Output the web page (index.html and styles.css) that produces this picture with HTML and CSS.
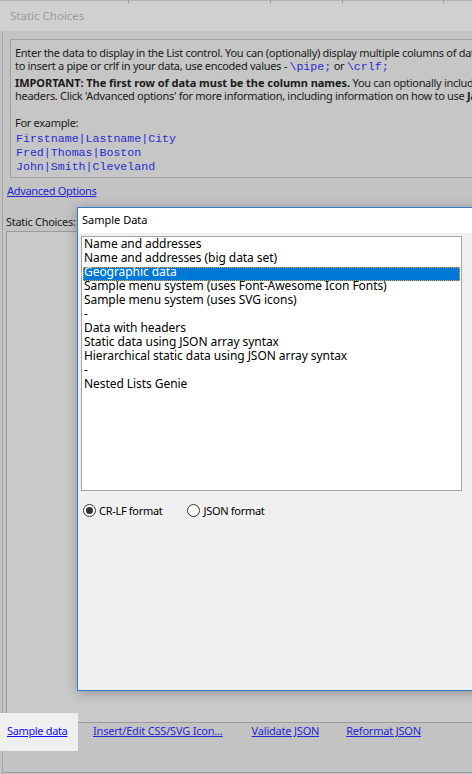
FILE: index.html
```html
<!DOCTYPE html>
<html>
<head>
<meta charset="utf-8">
<link rel="stylesheet" href="styles.css">
</head>
<body>
<div class="topline"><span class="tick t1"></span><span class="tick t2"></span><span class="tick t3"></span><span class="tick t4"></span></div>
<div class="titlebar">Static Choices</div>
<div class="main">
  <div class="info">
    <div class="line">Enter the data to display in the List control. You can (optionally) display multiple columns of data by separating them with a pipe. If you need</div>
    <div class="line">to insert a pipe or crlf in your data, use encoded values - <span class="code">\pipe;</span> or <span class="code">\crlf;</span></div>
    <div class="para">
      <div class="line"><b>IMPORTANT: The first row of data must be the column names.</b> You can optionally include column</div>
      <div class="line">headers. Click 'Advanced options' for more information, including information on how to use <b>JavaScript</b></div>
    </div>
    <div class="para2">
      <div class="line">For example:</div>
      <div class="monoblock">
        <div class="mono">Firstname|Lastname|City</div>
        <div class="mono">Fred|Thomas|Boston</div>
        <div class="mono">John|Smith|Cleveland</div>
      </div>
    </div>
  </div>
  <div class="adv"><a href="#">Advanced Options</a></div>
  <div class="label">Static Choices:</div>
  <div class="textarea"></div>
  <div class="links">
    <div class="hl"><a href="#">Sample data</a></div>
    <a href="#" class="l2">Insert/Edit CSS/SVG Icon...</a>
    <a href="#" class="l3">Validate JSON</a>
    <a href="#" class="l4">Reformat JSON</a>
  </div>
  <div class="bottomline"></div>
</div>

<div class="dialog">
  <div class="dtitle">Sample Data</div>
  <div class="dbody">
    <div class="listbox">
      <div class="item">Name and addresses</div>
      <div class="item">Name and addresses (big data set)</div>
      <div class="item sel">Geographic data</div>
      <div class="item">Sample menu system (uses Font-Awesome Icon Fonts)</div>
      <div class="item">Sample menu system (uses SVG icons)</div>
      <div class="item">-</div>
      <div class="item">Data with headers</div>
      <div class="item">Static data using JSON array syntax</div>
      <div class="item">Hierarchical static data using JSON array syntax</div>
      <div class="item">-</div>
      <div class="item">Nested Lists Genie</div>
    </div>
    <div class="radios">
      <label class="radio"><span class="circle checked"></span>CR-LF format</label>
      <label class="radio r2"><span class="circle"></span>JSON format</label>
    </div>
  </div>
</div>
</body>
</html>
```
FILE: styles.css
```css
html, body {
  margin: 0;
  padding: 0;
}
body {
  width: 472px;
  height: 774px;
  overflow: hidden;
  background: #c3c3c3;
  font-family: "Noto Sans", "Open Sans", sans-serif;
  font-size: 11px;
  letter-spacing: -0.3px;
  color: #1a1a1a;
  position: relative;
}
.topline {
  height: 1px;
  background: #b3b3b3;
  position: relative;
}
.tick {
  position: absolute;
  top: 0;
  width: 1px;
  height: 3px;
  background: #9a9a9a;
}
.t1 { left: 128px; }
.t2 { left: 270px; }
.t3 { left: 342px; }
.t4 { left: 443px; }
.titlebar {
  height: 30px;
  line-height: 30px;
  background: #d0d0d0;
  color: #9b9b9b;
  padding-left: 10px;
  font-size: 11.5px;
  letter-spacing: 0;
}
.main {
  margin-left: 2px;
  border-left: 1px solid #a3a3a3;
  height: 743px;
  box-sizing: border-box;
  padding-top: 8px;
}
.info {
  margin-left: 7px;
  width: 560px;
  height: 139px;
  box-sizing: border-box;
  border: 1px solid #a2a2a2;
  background: #c6c6c6;
  padding: 6px 0 0 4px;
  white-space: nowrap;
  overflow: hidden;
}
.line {
  height: 13px;
  line-height: 13px;
}
.para { margin-top: 4px; }
.para2 { margin-top: 14px; }
.monoblock { margin-top: 3px; }
.code, .mono {
  font-family: "Liberation Mono", "Courier New", monospace;
  color: #2b2bd0;
  letter-spacing: 0;
}
.code { font-size: 11.6px; }
.mono {
  font-size: 11.6px;
  height: 14px;
  line-height: 14px;
  padding-left: 1px;
}
b {
  font-weight: 700;
  letter-spacing: -0.05px;
}
a {
  color: #2525d6;
  text-decoration: underline;
}
.adv {
  margin-top: 6px;
  padding-left: 4px;
  height: 13px;
  line-height: 13px;
}
.label {
  margin-top: 18px;
  padding-left: 3px;
  height: 13px;
  line-height: 13px;
}
.textarea {
  margin-left: 3px;
  margin-top: 3px;
  height: 492px;
  box-sizing: border-box;
  border: 1px solid #9b9b9b;
  border-right: none;
  background: #cacaca;
}
.links {
  display: flex;
  align-items: center;
  margin-top: -10px;
  height: 38px;
  margin-left: -3px;
  letter-spacing: -0.2px;
}
.hl {
  background: #efefef;
  width: 78px;
  height: 38px;
  box-sizing: border-box;
  padding-left: 7px;
  padding-bottom: 3px;
  display: flex;
  align-items: center;
  letter-spacing: -0.35px;
}
.hl a { color: #1010ff; }
.links > a { margin-bottom: 3px; }
.l2 { margin-left: 15px; }
.l3 { margin-left: 29px; }
.l4 { margin-left: 27px; }
.bottomline {
  margin-top: 21px;
  margin-left: -1px;
  height: 1px;
  background: #9e9e9e;
}
.dialog {
  position: absolute;
  left: 77px;
  top: 207px;
  width: 420px;
  height: 484px;
  box-sizing: border-box;
  border: 1px solid #2f7ccc;
  background: #f0f0f0;
  box-shadow: 0 2px 12px rgba(0, 0, 0, 0.28);
  color: #000;
}
.dtitle {
  height: 25px;
  line-height: 24px;
  background: #fff;
  padding-left: 4px;
  font-size: 11px;
  letter-spacing: 0;
}
.dbody {
  padding: 3px 0 0 3px;
}
.listbox {
  width: 381px;
  height: 255px;
  box-sizing: border-box;
  border: 1px solid #a5a5a5;
  background: #fff;
  padding: 2px 1px 0 1px;
  font-size: 12px;
  letter-spacing: -0.06px;
}
.item {
  height: 14px;
  line-height: 10px;
  padding-left: 1px;
  box-sizing: border-box;
  white-space: nowrap;
}
.sel {
  background: #0078d7;
  color: #fff;
  outline: 1px dotted #f5a623;
  outline-offset: -1px;
}
.radios {
  display: flex;
  align-items: center;
  height: 14px;
  margin-top: 12px;
  padding-left: 2px;
}
.radio {
  display: flex;
  align-items: center;
}
.r2 { margin-left: 25px; }
.circle {
  width: 11px;
  height: 11px;
  border: 1px solid #333;
  border-radius: 50%;
  background: #fff;
  margin-right: 3px;
  position: relative;
}
.circle.checked::after {
  content: "";
  position: absolute;
  left: 2px;
  top: 2px;
  width: 7px;
  height: 7px;
  border-radius: 50%;
  background: #333;
}
```
